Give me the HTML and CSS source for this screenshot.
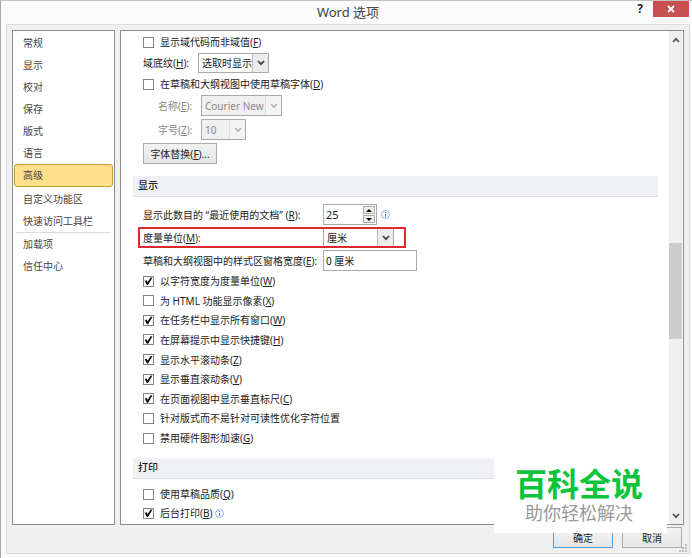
FILE: index.html
```html
<!DOCTYPE html>
<html lang="zh-CN">
<head>
  <meta charset="UTF-8" />
  <title>Word 选项</title>
  <link rel="stylesheet" href="styles.css">
</head>
<body>
  <div class="window">
    <header class="titlebar">
      <h1>Word 选项</h1>
      <div class="window-buttons">
        <button class="btn-help" type="button">?</button>
        <button class="btn-close" type="button" aria-label="关闭">
          <svg width="8" height="8" viewBox="0 0 8 8"><path d="M1 1L7 7M7 1L1 7" stroke="#fff" stroke-width="1.8"/></svg>
        </button>
      </div>
    </header>

    <div class="client">
      <div class="panes">
        <nav class="sidebar">
          <a href="#">常规</a>
          <a href="#">显示</a>
          <a href="#">校对</a>
          <a href="#">保存</a>
          <a href="#">版式</a>
          <a href="#">语言</a>
          <a href="#" class="active-link">高级</a>
          <a href="#">自定义功能区</a>
          <a href="#">快速访问工具栏</a>
          <hr>
          <a href="#">加载项</a>
          <a href="#">信任中心</a>
        </nav>

        <main class="content">
          <div class="options">
            <div class="group group-top">
              <label class="check"><input type="checkbox"><span>显示域代码而非域值(<u>F</u>)</span></label>
              <div class="row">
                <label for="shading">域底纹(<u>H</u>):</label>
                <div class="select select-shading">
                  <select id="shading"><option>选取时显示</option></select>
                  <span class="arrow"><svg width="8" height="6" viewBox="0 0 8 6"><path d="M1 1L4 4.2L7 1" fill="none" stroke="#444" stroke-width="1.8"/></svg></span>
                </div>
              </div>
              <label class="check"><input type="checkbox"><span>在草稿和大纲视图中使用草稿字体(<u>D</u>)</span></label>
              <div class="row row-sub">
                <label for="fontName">名称(<u>E</u>):</label>
                <div class="select select-font">
                  <select id="fontName" disabled><option>Courier New</option></select>
                  <span class="arrow"><svg width="8" height="6" viewBox="0 0 8 6"><path d="M1 1L4 4.2L7 1" fill="none" stroke="#aaa" stroke-width="1.4"/></svg></span>
                </div>
              </div>
              <div class="row row-sub">
                <label for="fontSize">字号(<u>Z</u>):</label>
                <div class="select select-size">
                  <select id="fontSize" disabled><option>10</option></select>
                  <span class="arrow"><svg width="8" height="6" viewBox="0 0 8 6"><path d="M1 1L4 4.2L7 1" fill="none" stroke="#aaa" stroke-width="1.4"/></svg></span>
                </div>
              </div>
              <button class="btn btn-replace" type="button">字体替换(<u>F</u>)...</button>
            </div>

            <h2>显示</h2>
            <div class="group">
              <div class="row row-wide">
                <label for="recent">显示此数目的 “最近使用的文档” (<u>R</u>):</label>
                <div class="spinner">
                  <input id="recent" type="text" value="25">
                  <div class="spin-buttons">
                    <button type="button" aria-label="增加"><svg width="6" height="3" viewBox="0 0 6 3"><path d="M0 3L3 0L6 3Z"/></svg></button>
                    <button type="button" aria-label="减少"><svg width="6" height="3" viewBox="0 0 6 3"><path d="M0 0L3 3L6 0Z"/></svg></button>
                  </div>
                </div>
                <svg class="info" width="9" height="9" viewBox="0 0 9 9"><circle cx="4.5" cy="4.5" r="4" fill="#f8fbff" stroke="#8fb4de"/><path d="M4.5 2V3M4.5 4V7" stroke="#4a82c8"/></svg>
              </div>
              <div class="row row-wide marked">
                <label for="unit">度量单位(<u>M</u>):</label>
                <div class="select select-unit">
                  <select id="unit"><option>厘米</option></select>
                  <span class="arrow"><svg width="8" height="6" viewBox="0 0 8 6"><path d="M1 1L4 4.2L7 1" fill="none" stroke="#444" stroke-width="1.8"/></svg></span>
                </div>
              </div>
              <div class="row row-wide">
                <label for="paneWidth">草稿和大纲视图中的样式区窗格宽度(<u>E</u>):</label>
                <input class="text" id="paneWidth" type="text" value="0 厘米">
              </div>
            </div>
            <div class="group group-checks">
              <label class="check"><input type="checkbox" checked><span>以字符宽度为度量单位(<u>W</u>)</span></label>
              <label class="check"><input type="checkbox"><span>为 HTML 功能显示像素(<u>X</u>)</span></label>
              <label class="check"><input type="checkbox" checked><span>在任务栏中显示所有窗口(<u>W</u>)</span></label>
              <label class="check"><input type="checkbox" checked><span>在屏幕提示中显示快捷键(<u>H</u>)</span></label>
              <label class="check"><input type="checkbox" checked><span>显示水平滚动条(<u>Z</u>)</span></label>
              <label class="check"><input type="checkbox" checked><span>显示垂直滚动条(<u>V</u>)</span></label>
              <label class="check"><input type="checkbox" checked><span>在页面视图中显示垂直标尺(<u>C</u>)</span></label>
              <label class="check"><input type="checkbox"><span>针对版式而不是针对可读性优化字符位置</span></label>
              <label class="check"><input type="checkbox"><span>禁用硬件图形加速(<u>G</u>)</span></label>
            </div>

            <h2>打印</h2>
            <div class="group group-print">
              <label class="check"><input type="checkbox"><span>使用草稿品质(<u>Q</u>)</span></label>
              <label class="check"><input type="checkbox" checked><span>后台打印(<u>B</u>)</span>
                <svg class="info" width="9" height="9" viewBox="0 0 9 9"><circle cx="4.5" cy="4.5" r="4" fill="#f8fbff" stroke="#8fb4de"/><path d="M4.5 2V3M4.5 4V7" stroke="#4a82c8"/></svg>
              </label>
            </div>
          </div>

          <div class="scrollbar">
            <button type="button" aria-label="向上滚动"><svg width="8" height="6" viewBox="0 0 8 6"><path d="M1 5L4 1.8L7 5" fill="none" stroke="#555" stroke-width="1.8"/></svg></button>
            <div class="track">
              <div class="thumb"></div>
            </div>
            <button type="button" aria-label="向下滚动"><svg width="8" height="6" viewBox="0 0 8 6"><path d="M1 1L4 4.2L7 1" fill="none" stroke="#555" stroke-width="1.8"/></svg></button>
          </div>
        </main>
      </div>

      <footer class="actions">
        <button class="btn btn-ok" type="button">确定</button>
        <button class="btn btn-cancel" type="button">取消</button>
        <svg class="grip" width="8" height="8" viewBox="0 0 8 8" fill="#bbb"><path d="M6 0h2v2H6zM3 3h2v2H3zM6 3h2v2H6zM0 6h2v2H0zM3 6h2v2H3zM6 6h2v2H6z"/></svg>
      </footer>
    </div>

    <div class="watermark">
      <strong>百科全说</strong>
      <span>助你轻松解决</span>
    </div>
  </div>
</body>
</html>
```

FILE: styles.css
```css
* { box-sizing: border-box; }
body {
  margin: 0; background: #fbfbfb; color: #222;
  font: 10px/16px "Noto Sans", "Noto Sans CJK SC", sans-serif;
}
button, input, select { font: inherit; color: inherit; margin: 0; padding: 0; }
svg { display: block; flex: none; }
u { text-underline-offset: 1px; }

.window {
  position: relative; display: flex; flex-direction: column;
  min-height: 100vh; padding: 0 2px 4px 5px;
  border-top: 1px solid #c4c4c4; border-left: 1px solid #aaa;
}
.titlebar {
  display: grid; grid-template-columns: 1fr auto 1fr;
  height: 23px;
}
.titlebar h1 {
  grid-column: 2; margin: 0;
  font-size: 13px; line-height: 22px; font-weight: normal; color: #444;
}
.window-buttons { display: flex; justify-content: flex-end; align-items: flex-start; }
.btn-help {
  width: 26px; height: 16px; border: none; background: none;
  font-size: 12px; font-weight: bold;
}
.btn-close {
  display: flex; align-items: center; justify-content: center;
  width: 36px; height: 16px; margin-right: 1px; border: none; background: #c75050;
}

.client {
  flex: 1; display: flex; flex-direction: column;
  padding: 5px 5px 0; background: #f0f0f0; border: 1px solid #dcdcdc;
}
.panes { flex: 1; display: flex; gap: 5px; }
.sidebar {
  width: 103px; padding: 1px;
  background: #fff; border: 1px solid #8c8c8c;
}
.sidebar a {
  display: block; height: 22px; padding: 0 9px; line-height: 22px;
  color: #444; text-decoration: none;
}
.sidebar .active-link {
  height: 23px; padding: 0 8px; margin-bottom: 1px;
  background: #ffe08a; border: 1px solid #c9983f; border-radius: 3px;
  line-height: 20px;
}
.sidebar hr { margin: 0 2px; border: none; border-top: 1px solid #dcdcdc; }

.content {
  flex: 1; display: flex;
  background: #fff; border: 1px solid #8c8c8c;
}
.options { flex: 1; padding: 3px 11px 0 12px; }
.group { display: flex; flex-direction: column; align-items: flex-start; gap: 2px; padding-left: 10px; }
.group-top, .group-print { gap: 3px; }
.group-checks { height: 173px; justify-content: space-between; gap: 0; margin-top: 2px; }
.options h2 {
  height: 21px; margin: 12px 0 7px; padding-left: 5px;
  background: #f0f1f5; border-bottom: 1px solid #dddfe8;
  font-size: 10px; line-height: 18px; font-weight: 500;
}

.check { display: flex; align-items: center; height: 16px; }
.check input {
  appearance: none; width: 11px; height: 11px; margin-right: 6px;
  background: #fff; border: 1px solid #858585;
}
.check input:checked::before {
  content: ""; display: block; width: 9px; height: 9px;
  background: #111;
  clip-path: polygon(8% 48%, 28% 42%, 40% 62%, 74% 10%, 94% 10%, 46% 94%, 32% 94%);
}
.check .info { margin-left: 2px; }

.row { display: flex; align-items: center; }
.row label { width: 55px; }
.row-sub { padding-left: 15px; color: #888; }
.row-sub label { width: 43px; }
.row-wide label { width: 180px; white-space: nowrap; }
.row .info { margin-left: 4px; }

.select { display: grid; height: 21px; border: 1px solid #aaa; background: #fff; }
.select select {
  grid-area: 1 / 1; appearance: none; width: 100%;
  padding-left: 3px; border: none; background: none; border-radius: 0;
}
.select .arrow {
  grid-area: 1 / 1; justify-self: end; pointer-events: none;
  display: flex; align-items: center; justify-content: center;
  width: 16px; background: #ececec; border-left: 1px solid #bbb;
}
.select-shading { width: 71px; height: 20px; }
.select-font { width: 81px; }
.select-size { width: 45px; }
.select-unit { width: 71px; }
.select-font, .select-size { background: #f0f0f0; }
.select-font select, .select-size select { opacity: 1; }
.select-font .arrow, .select-size .arrow { background: #f3f3f3; border-color: #ddd; }

.spinner {
  display: flex; align-items: center;
  width: 54px; height: 21px; padding: 0 1px 0 2px; border: 1px solid #aaa;
}
.spinner input { flex: 1; min-width: 0; border: none; background: none; font-size: 11px; }
.spin-buttons { display: flex; flex-direction: column; gap: 1px; }
.spin-buttons button {
  display: flex; align-items: center; justify-content: center;
  width: 12px; height: 8px; border: 1px solid #aaa; background: #f0f0f0;
}
.text { width: 94px; height: 21px; padding-left: 2px; border: 1px solid #aaa; }

/* red frame round the unit row */
.marked { position: relative; }
.marked::after {
  content: ""; position: absolute; inset: 0 -12px 0 -5px;
  border: 2px solid #dd2a30; pointer-events: none;
}

.scrollbar { display: flex; flex-direction: column; width: 13px; margin-right: 1px; background: #f0f0f0; }
.scrollbar button {
  display: flex; align-items: center; justify-content: center;
  height: 17px; border: none; background: none;
}
.track { flex: 1; display: flex; flex-direction: column; }
.track::before { content: ""; flex: 195; }
.track::after { content: ""; flex: 168; }
.thumb { flex: 95; background: #cdcdcd; }

.btn {
  height: 21px; border: 1px solid #acacac;
  background: linear-gradient(#f2f2f2, #e6e6e6);
}
.btn-replace { width: 74px; }
.actions { display: flex; justify-content: flex-end; gap: 9px; height: 28px; padding-top: 2px; }
.actions .btn { width: 60px; }
.btn-ok { border-color: #569de5; }
.grip { align-self: flex-end; margin: 0 -3px 1px -12px; }

.watermark {
  position: absolute; right: 25px; bottom: 25px;
  display: flex; flex-direction: column; align-items: center;
  width: 173px; height: 75px; padding: 6px 3px 0 0; background: #fff;
  font-family: "Noto Sans CJK SC", sans-serif;
}
.watermark strong { font-size: 32px; line-height: 36px; font-weight: bold; color: #0ec43c; }
.watermark span { font-size: 18px; line-height: 24px; color: #999; }
```
